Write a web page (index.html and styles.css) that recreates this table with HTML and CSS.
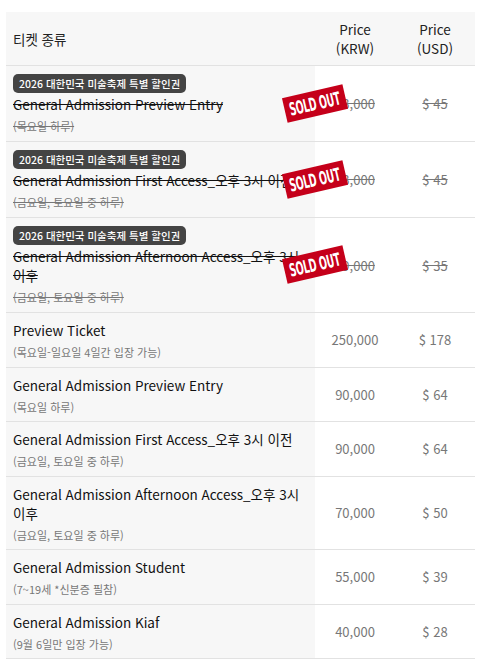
FILE: index.html
```html
<!DOCTYPE html>
<html lang="ko">

<head>
    <meta charset="UTF-8">
    <meta name="viewport" content="width=device-width, initial-scale=1.0">
    <title>티켓 가격</title>
    <link rel="stylesheet" href="styles.css">
</head>

<body>
    <table class="price-table">
        <colgroup>
            <col class="col-name">
            <col class="col-price">
            <col class="col-price">
        </colgroup>
        <thead>
            <tr>
                <th class="th-name">티켓 종류</th>
                <th>Price<br>(KRW)</th>
                <th>Price<br>(USD)</th>
            </tr>
        </thead>
        <tbody>
            <tr class="sold">
                <td class="name">
                    <div class="badge">2026 대한민국 미술축제 특별 할인권</div>
                    <div class="title">General Admission Preview Entry</div>
                    <div class="sub">(목요일 하루)</div>
                    <span class="stamp"><span>SOLD OUT</span></span>
                </td>
                <td class="price">63,000</td>
                <td class="price">$ 45</td>
            </tr>
            <tr class="sold">
                <td class="name">
                    <div class="badge">2026 대한민국 미술축제 특별 할인권</div>
                    <div class="title">General Admission First Access_오후 3시 이전</div>
                    <div class="sub">(금요일, 토요일 중 하루)</div>
                    <span class="stamp"><span>SOLD OUT</span></span>
                </td>
                <td class="price">63,000</td>
                <td class="price">$ 45</td>
            </tr>
            <tr class="sold">
                <td class="name">
                    <div class="badge">2026 대한민국 미술축제 특별 할인권</div>
                    <div class="title">General Admission Afternoon Access_오후 3시 이후</div>
                    <div class="sub">(금요일, 토요일 중 하루)</div>
                    <span class="stamp"><span>SOLD OUT</span></span>
                </td>
                <td class="price">49,000</td>
                <td class="price">$ 35</td>
            </tr>
            <tr>
                <td class="name">
                    <div class="title">Preview Ticket</div>
                    <div class="sub">(목요일-일요일 4일간 입장 가능)</div>
                </td>
                <td class="price">250,000</td>
                <td class="price">$ 178</td>
            </tr>
            <tr>
                <td class="name">
                    <div class="title">General Admission Preview Entry</div>
                    <div class="sub">(목요일 하루)</div>
                </td>
                <td class="price">90,000</td>
                <td class="price">$ 64</td>
            </tr>
            <tr>
                <td class="name">
                    <div class="title">General Admission First Access_오후 3시 이전</div>
                    <div class="sub">(금요일, 토요일 중 하루)</div>
                </td>
                <td class="price">90,000</td>
                <td class="price">$ 64</td>
            </tr>
            <tr>
                <td class="name">
                    <div class="title">General Admission Afternoon Access_오후 3시 이후</div>
                    <div class="sub">(금요일, 토요일 중 하루)</div>
                </td>
                <td class="price">70,000</td>
                <td class="price">$ 50</td>
            </tr>
            <tr>
                <td class="name">
                    <div class="title">General Admission Student</div>
                    <div class="sub">(7~19세 *신분증 필참)</div>
                </td>
                <td class="price">55,000</td>
                <td class="price">$ 39</td>
            </tr>
            <tr>
                <td class="name">
                    <div class="title">General Admission Kiaf</div>
                    <div class="sub">(9월 6일만 입장 가능)</div>
                </td>
                <td class="price">40,000</td>
                <td class="price">$ 28</td>
            </tr>
        </tbody>
    </table>
</body>

</html>
```

FILE: styles.css
```css
body {
    margin: 0;
    padding: 12px 6px;
    background: #fff;
    font-family: "Noto Sans CJK KR", "Noto Sans", sans-serif;
    color: #222;
}

.price-table {
    width: 469px;
    border-collapse: collapse;
    table-layout: fixed;
}

.col-name {
    width: 309px;
}

.col-price {
    width: 80px;
}

.price-table th {
    background: #f7f7f7;
    font-weight: 400;
    font-size: 13.5px;
    line-height: 19px;
    color: #222;
    text-align: center;
    padding: 8px 0 7px;
    border-bottom: 1px solid #e2e2e2;
}

.price-table th.th-name {
    text-align: left;
    padding-left: 7px;
}

.price-table td {
    border-bottom: 1px solid #e2e2e2;
    vertical-align: middle;
}

.name {
    position: relative;
    background: #f7f7f7;
    padding: 8px 12px 6.5px 7px;
    word-break: keep-all;
}

.title {
    font-size: 13.5px;
    line-height: 19px;
    color: #111;
}

.sub {
    font-size: 11px;
    line-height: 16px;
    color: #777;
    margin-top: 4px;
}

.price {
    text-align: center;
    font-size: 13px;
    color: #777;
}

.badge {
    width: fit-content;
    background: #444;
    color: #fff;
    font-size: 10.5px;
    font-weight: 500;
    line-height: 19px;
    padding: 0 6px;
    border-radius: 5px;
    margin-bottom: 2px;
}

.sold .name {
    padding-bottom: 7px;
}

.sold .title,
.sold .sub,
.sold .price {
    text-decoration: line-through;
}

.stamp {
    position: absolute;
    right: -31px;
    top: 50%;
    width: 62px;
    height: 25px;
    margin-top: -13px;
    background: #c5001a;
    transform: rotate(-13deg);
    display: flex;
    align-items: center;
    justify-content: center;
    overflow: hidden;
    z-index: 2;
}

.stamp span {
    display: block;
    color: #fff;
    font-family: "DejaVu Sans", sans-serif;
    font-weight: 700;
    font-size: 18px;
    letter-spacing: -0.5px;
    transform: scaleX(0.52);
    white-space: nowrap;
}
```
